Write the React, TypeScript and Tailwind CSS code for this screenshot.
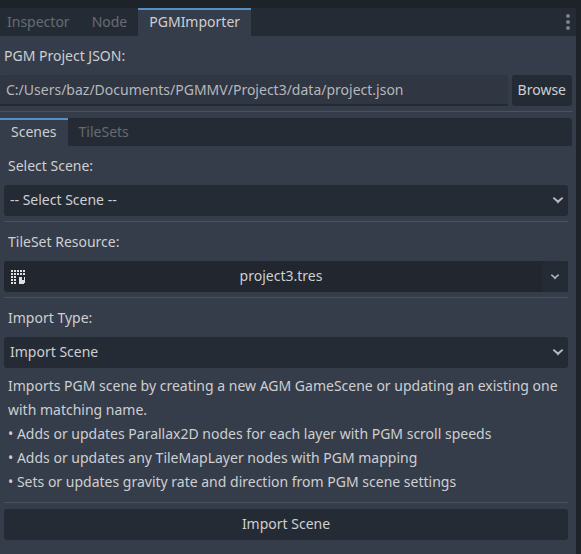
import { useState } from "react";

function Separator() {
  return <hr className="h-px w-full border-0 bg-[#4b525f]" />;
}

function Chevron({ className }: { className: string }) {
  return (
    <svg viewBox="0 0 10 7" className={className} fill="none" stroke="#b5b8bd" strokeWidth="2" strokeLinecap="round" aria-hidden="true">
      <path d="M1 1.2C2.6 2.4 4 3.6 5 5C6 3.6 7.4 2.4 9 1.2" />
    </svg>
  );
}

function TileSetIcon() {
  const cells = [
    [0, 0], [3, 0], [6, 0], [9, 0], [12, 0],
    [0, 3], [3, 3], [6, 3], [9, 3], [12, 3],
    [0, 6], [3, 6],
    [0, 9], [3, 9],
    [0, 12], [3, 12],
  ];
  return (
    <svg viewBox="0 0 14 14" className="size-3.5" fill="#e0e0e0" shapeRendering="crispEdges" aria-hidden="true">
      {cells.map(([x, y]) => (
        <rect key={`${x}-${y}`} x={x} y={y} width="2" height="2" />
      ))}
      <path d="M8 7h3v3h2V7h1v6h-1v1H8z" />
    </svg>
  );
}

function Tab({ label, active, onSelect }: { label: string; active: boolean; onSelect: () => void }) {
  return (
    <button
      type="button"
      role="tab"
      aria-selected={active}
      onClick={onSelect}
      className={
        active
          ? "h-7 border-t-2 border-[#5591c7] bg-[#363d4a] px-[11px] pb-0.5 text-[#cdcfd2]"
          : "h-7 px-[11px] text-[#666b73]"
      }
    >
      {label}
    </button>
  );
}

function SelectField({ id, label, options }: { id: string; label: string; options: string[] }) {
  return (
    <div className="flex flex-col gap-[7px]">
      <label htmlFor={id} className="px-1">{label}</label>
      <div className="grid items-center">
        <select
          id={id}
          className="col-start-1 row-start-1 h-[31px] w-full appearance-none rounded-[3px] bg-[#252b34] px-1.5 pb-px"
        >
          {options.map((option) => (
            <option key={option}>{option}</option>
          ))}
        </select>
        <Chevron className="pointer-events-none col-start-1 row-start-1 mr-[5px] h-[7px] w-2.5 justify-self-end" />
      </div>
    </div>
  );
}

export default function App() {
  const [dock, setDock] = useState("PGMImporter");
  const [page, setPage] = useState("Scenes");

  return (
    <div className="min-h-screen bg-[#1e2329] pt-2 pr-[5px] font-['Noto_Sans',sans-serif] text-[14px] leading-6 text-[#cdcfd2]">
      <div className="flex min-h-[calc(100vh-8px)] flex-col rounded-tr-[3px] bg-[#363d4a]">
        <header className="flex items-center justify-between rounded-tr-[3px] bg-[#252b34] pr-1.5">
          <div role="tablist" className="-ml-1 flex">
            {["Inspector", "Node", "PGMImporter"].map((name) => (
              <Tab key={name} label={name} active={dock === name} onSelect={() => setDock(name)} />
            ))}
          </div>
          <button type="button" aria-label="Dock options">
            <svg viewBox="0 0 4 16" className="h-4 w-1" fill="#7c8087" aria-hidden="true">
              <circle cx="2" cy="2" r="2" />
              <circle cx="2" cy="8" r="2" />
              <circle cx="2" cy="14" r="2" />
            </svg>
          </button>
        </header>

        <main className="flex flex-col pt-2">
          <label htmlFor="project" className="px-1">PGM Project JSON:</label>
          <div className="mt-[7px] flex gap-1 pr-1">
            <input
              id="project"
              type="text"
              defaultValue="C:/Users/baz/Documents/PGMMV/Project3/data/project.json"
              className="h-[31px] min-w-0 flex-1 rounded-t-[3px] border-b-2 border-[#252b34] bg-[#303642] px-1.5 text-[#b5b8bd]"
            />
            <button type="button" className="h-[31px] rounded-[3px] bg-[#252b34] px-1.5 pb-px">Browse</button>
          </div>
          <div className="mt-[5px] pr-[3px]">
            <Separator />
          </div>

          <section className="mt-1.5 pr-1">
            <div role="tablist" className="flex rounded-tr-[3px] bg-[#252b34]">
              {["Scenes", "TileSets"].map((name) => (
                <Tab key={name} label={name} active={page === name} onSelect={() => setPage(name)} />
              ))}
            </div>
            <div role="tabpanel" className="flex flex-col px-1 pt-2">
              <SelectField id="scene" label="Select Scene:" options={["-- Select Scene --"]} />
              <div className="mt-[5px] mb-2">
                <Separator />
              </div>

              <span className="px-1">TileSet Resource:</span>
              <div className="mt-[7px] flex h-[31px] overflow-hidden rounded-[3px] bg-[#22262e]">
                <button type="button" className="grid min-w-0 flex-1 items-center">
                  <span className="col-start-1 row-start-1 justify-self-start pl-[7px]">
                    <TileSetIcon />
                  </span>
                  <span className="col-start-1 row-start-1 pb-px pl-4">project3.tres</span>
                </button>
                <button type="button" aria-label="Resource options" className="flex w-[26px] items-center justify-center rounded-l-[3px] bg-[#252b34]">
                  <Chevron className="mt-px h-1.5 w-2" />
                </button>
              </div>
              <div className="mt-[5px] mb-2">
                <Separator />
              </div>

              <SelectField id="import-type" label="Import Type:" options={["Import Scene"]} />
              <div className="mt-1.5 mb-2 px-1">
                <p>Imports PGM scene by creating a new AGM GameScene or updating an existing one with matching name.</p>
                <p>• Adds or updates Parallax2D nodes for each layer with PGM scroll speeds</p>
                <p>• Adds or updates any TileMapLayer nodes with PGM mapping</p>
                <p>• Sets or updates gravity rate and direction from PGM scene settings</p>
              </div>
              <Separator />
              <button type="button" className="mt-1.5 h-[31px] rounded-[3px] bg-[#252b34] pb-px">Import Scene</button>
            </div>
          </section>
        </main>
      </div>
    </div>
  );
}
